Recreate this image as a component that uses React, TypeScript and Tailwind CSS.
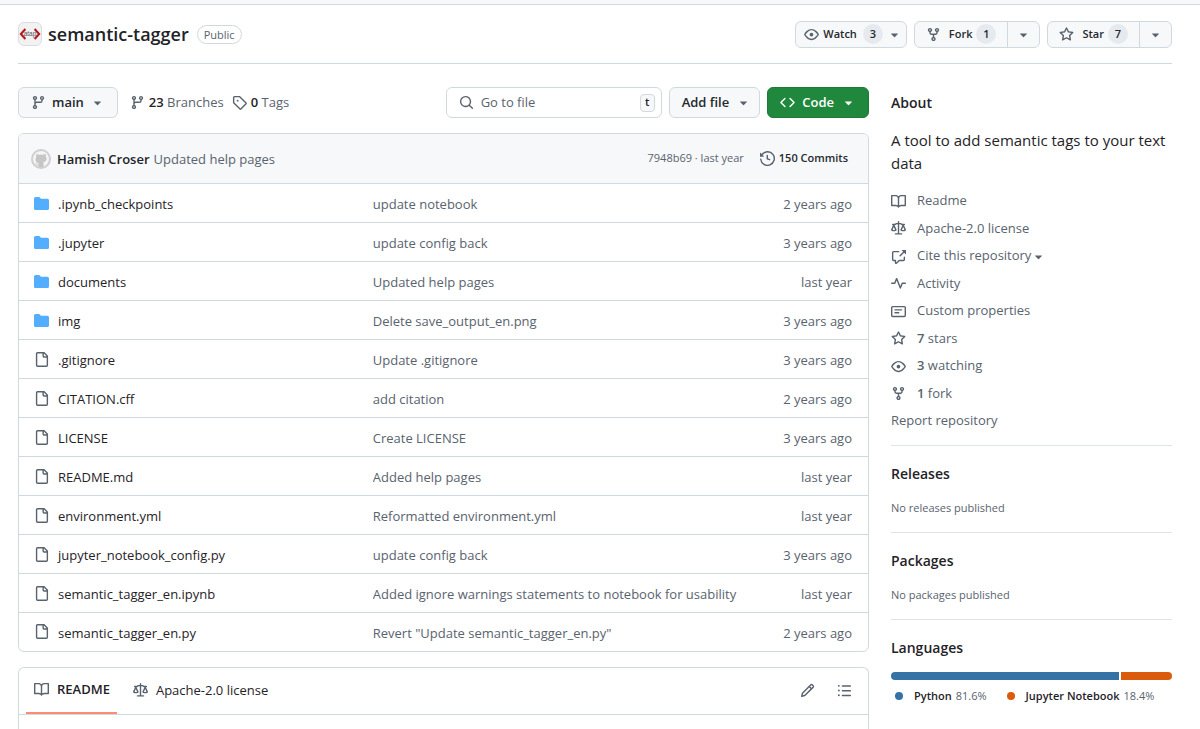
import type { ReactNode } from 'react'
import clsx from 'clsx'

const paths = {
  branch: 'M9.5 3.25a2.25 2.25 0 1 1 3 2.122V6A2.5 2.5 0 0 1 10 8.5H6a1 1 0 0 0-1 1v1.128a2.251 2.251 0 1 1-1.5 0V5.372a2.25 2.25 0 1 1 1.5 0v1.836A2.493 2.493 0 0 1 6 7h4a1 1 0 0 0 1-1v-.628A2.25 2.25 0 0 1 9.5 3.25Zm-6 0a.75.75 0 1 0 1.5 0 .75.75 0 0 0-1.5 0Zm8.25-.75a.75.75 0 1 0 0 1.5.75.75 0 0 0 0-1.5ZM4.25 12a.75.75 0 1 0 0 1.5.75.75 0 0 0 0-1.5Z',
  tag: 'M1 7.775V2.75C1 1.784 1.784 1 2.75 1h5.025c.464 0 .91.184 1.238.513l6.25 6.25a1.75 1.75 0 0 1 0 2.474l-5.026 5.026a1.75 1.75 0 0 1-2.474 0l-6.25-6.25A1.752 1.752 0 0 1 1 7.775Zm1.5 0c0 .066.026.13.073.177l6.25 6.25a.25.25 0 0 0 .354 0l5.025-5.025a.25.25 0 0 0 0-.354l-6.25-6.25a.25.25 0 0 0-.177-.073H2.75a.25.25 0 0 0-.25.25ZM6 5a1 1 0 1 1 0 2 1 1 0 0 1 0-2Z',
  search: 'M10.68 11.74a6 6 0 0 1-7.922-8.982 6 6 0 0 1 8.982 7.922l3.04 3.04a.749.749 0 0 1-.326 1.275.749.749 0 0 1-.734-.215ZM11.5 7a4.499 4.499 0 1 0-8.997 0A4.499 4.499 0 0 0 11.5 7Z',
  code: 'm11.28 3.22 4.25 4.25a.75.75 0 0 1 0 1.06l-4.25 4.25a.749.749 0 0 1-1.275-.326.749.749 0 0 1 .215-.734L13.94 8l-3.72-3.72a.749.749 0 0 1 .326-1.275.749.749 0 0 1 .734.215Zm-6.56 0a.751.751 0 0 1 1.042.018.751.751 0 0 1 .018 1.042L2.06 8l3.72 3.72a.749.749 0 0 1-.326 1.275.749.749 0 0 1-.734-.215L.47 8.53a.75.75 0 0 1 0-1.06Z',
  caret: 'm4.427 7.427 3.396 3.396a.25.25 0 0 0 .354 0l3.396-3.396A.25.25 0 0 0 11.396 7H4.604a.25.25 0 0 0-.177.427Z',
  eye: 'M8 2c1.981 0 3.671.992 4.933 2.078 1.27 1.091 2.187 2.345 2.637 3.023a1.62 1.62 0 0 1 0 1.798c-.45.678-1.367 1.932-2.637 3.023C11.67 13.008 9.981 14 8 14c-1.981 0-3.671-.992-4.933-2.078C1.797 10.83.88 9.576.43 8.898a1.62 1.62 0 0 1 0-1.798c.45-.677 1.367-1.931 2.637-3.022C4.33 2.992 6.019 2 8 2ZM1.679 7.932a.12.12 0 0 0 0 .136c.411.622 1.241 1.75 2.366 2.717C5.176 11.758 6.527 12.5 8 12.5c1.473 0 2.825-.742 3.955-1.715 1.124-.967 1.954-2.096 2.366-2.717a.12.12 0 0 0 0-.136c-.412-.621-1.242-1.75-2.366-2.717C10.824 4.242 9.473 3.5 8 3.5c-1.473 0-2.825.742-3.955 1.715-1.124.967-1.954 2.096-2.366 2.717ZM8 10a2 2 0 1 1-.001-3.999A2 2 0 0 1 8 10Z',
  fork: 'M5 5.372v.878c0 .414.336.75.75.75h4.5a.75.75 0 0 0 .75-.75v-.878a2.25 2.25 0 1 1 1.5 0v.878a2.25 2.25 0 0 1-2.25 2.25h-1.5v2.128a2.251 2.251 0 1 1-1.5 0V8.5h-1.5A2.25 2.25 0 0 1 3.5 6.25v-.878a2.25 2.25 0 1 1 1.5 0ZM5 3.25a.75.75 0 1 0-1.5 0 .75.75 0 0 0 1.5 0Zm6.75.75a.75.75 0 1 0 0-1.5.75.75 0 0 0 0 1.5Zm-3 8.75a.75.75 0 1 0-1.5 0 .75.75 0 0 0 1.5 0Z',
  star: 'M8 .25a.75.75 0 0 1 .673.418l1.882 3.815 4.21.612a.75.75 0 0 1 .416 1.279l-3.046 2.97.719 4.192a.751.751 0 0 1-1.088.791L8 12.347l-3.766 1.98a.75.75 0 0 1-1.088-.79l.72-4.194L.818 6.374a.75.75 0 0 1 .416-1.28l4.21-.611L7.327.668A.75.75 0 0 1 8 .25Zm0 2.445L6.615 5.5a.75.75 0 0 1-.564.41l-3.097.45 2.24 2.184a.75.75 0 0 1 .216.664l-.528 3.084 2.769-1.456a.75.75 0 0 1 .698 0l2.77 1.456-.53-3.084a.75.75 0 0 1 .216-.664l2.24-2.183-3.096-.45a.75.75 0 0 1-.564-.41L8 2.694Z',
  history: 'm.427 1.927 1.215 1.215a8.002 8.002 0 1 1-1.6 5.685.75.75 0 1 1 1.493-.154 6.5 6.5 0 1 0 1.18-4.458l1.358 1.358A.25.25 0 0 1 3.896 6H.25A.25.25 0 0 1 0 5.75V2.104a.25.25 0 0 1 .427-.177ZM7.75 4a.75.75 0 0 1 .75.75v2.992l2.028.812a.75.75 0 0 1-.557 1.392l-2.5-1A.751.751 0 0 1 7 8.25v-3.5A.75.75 0 0 1 7.75 4Z',
  book: 'M0 1.75A.75.75 0 0 1 .75 1h4.253c1.227 0 2.317.59 3 1.501A3.743 3.743 0 0 1 11.006 1h4.245a.75.75 0 0 1 .75.75v10.5a.75.75 0 0 1-.75.75h-4.507a2.25 2.25 0 0 0-1.591.659l-.622.621a.75.75 0 0 1-1.06 0l-.622-.621A2.25 2.25 0 0 0 5.258 13H.75a.75.75 0 0 1-.75-.75Zm7.251 10.324.004-5.073-.002-2.253A2.25 2.25 0 0 0 5.003 2.5H1.5v9h3.757a3.75 3.75 0 0 1 1.994.574ZM8.755 4.75l-.004 7.322a3.752 3.752 0 0 1 1.992-.572H14.5v-9h-3.495a2.25 2.25 0 0 0-2.25 2.25Z',
  law: 'M8.75.75V2h.985c.304 0 .603.08.867.231l1.29.736c.038.022.08.033.124.033h2.234a.75.75 0 0 1 0 1.5h-.427l2.111 4.692a.75.75 0 0 1-.154.838l-.53-.53.529.531-.001.002-.002.002-.006.006-.006.005-.01.01-.045.04c-.21.176-.441.327-.686.45C14.556 10.78 13.88 11 13 11a4.498 4.498 0 0 1-2.023-.454 3.544 3.544 0 0 1-.686-.45l-.045-.04-.016-.015-.006-.006-.004-.004v-.001a.75.75 0 0 1-.154-.838L12.178 4.5h-.162c-.305 0-.604-.079-.868-.231l-1.29-.736a.245.245 0 0 0-.124-.033H8.75V13h2.5a.75.75 0 0 1 0 1.5h-6.5a.75.75 0 0 1 0-1.5h2.5V3.5h-.984a.245.245 0 0 0-.124.033l-1.289.737c-.265.15-.564.23-.869.23h-.162l2.112 4.692a.75.75 0 0 1-.154.838l-.53-.53.529.531-.001.002-.002.002-.006.006-.016.015-.045.04c-.21.176-.441.327-.686.45C4.556 10.78 3.88 11 3 11a4.498 4.498 0 0 1-2.023-.454 3.544 3.544 0 0 1-.686-.45l-.045-.04-.016-.015-.006-.006-.004-.004v-.001a.75.75 0 0 1-.154-.838L2.178 4.5H1.75a.75.75 0 0 1 0-1.5h2.234a.249.249 0 0 0 .125-.033l1.288-.737c.265-.15.564-.23.869-.23h.984V.75a.75.75 0 0 1 1.5 0Zm2.945 8.477c.285.135.718.273 1.305.273s1.02-.138 1.305-.273L13 6.327Zm-10 0c.285.135.718.273 1.305.273s1.02-.138 1.305-.273L3 6.327Z',
  cite: 'M2.75 3.5a.25.25 0 0 0-.25.25v7.5c0 .138.112.25.25.25h2a.75.75 0 0 1 .75.75v2.19l2.72-2.72a.749.749 0 0 1 .53-.22h4.5a.25.25 0 0 0 .25-.25v-2.5a.75.75 0 0 1 1.5 0v2.5A1.75 1.75 0 0 1 13.25 13H9.06l-2.573 2.573A1.458 1.458 0 0 1 4 14.543V13H2.75A1.75 1.75 0 0 1 1 11.25v-7.5C1 2.784 1.784 2 2.75 2h5.5a.75.75 0 0 1 0 1.5ZM16 1.25v4.146a.25.25 0 0 1-.427.177L14.03 4.03l-3.75 3.75a.749.749 0 0 1-1.275-.326.749.749 0 0 1 .215-.734l3.75-3.75-1.543-1.543A.25.25 0 0 1 11.604 1h4.146a.25.25 0 0 1 .25.25Z',
  pulse: 'M6 2c.306 0 .582.187.696.471L10 10.731l1.304-3.26A.751.751 0 0 1 12 7h3.25a.75.75 0 0 1 0 1.5h-2.742l-1.812 4.528a.751.751 0 0 1-1.392 0L6 4.77 4.696 8.03A.75.75 0 0 1 4 8.5H.75a.75.75 0 0 1 0-1.5h2.742l1.812-4.529A.751.751 0 0 1 6 2Z',
  note: 'M0 3.75C0 2.784.784 2 1.75 2h12.5c.966 0 1.75.784 1.75 1.75v8.5A1.75 1.75 0 0 1 14.25 14H1.75A1.75 1.75 0 0 1 0 12.25Zm1.75-.25a.25.25 0 0 0-.25.25v8.5c0 .138.112.25.25.25h12.5a.25.25 0 0 0 .25-.25v-8.5a.25.25 0 0 0-.25-.25ZM3.5 6.25a.75.75 0 0 1 .75-.75h7a.75.75 0 0 1 0 1.5h-7a.75.75 0 0 1-.75-.75Zm.75 2.25h4a.75.75 0 0 1 0 1.5h-4a.75.75 0 0 1 0-1.5Z',
  pencil: 'M11.013 1.427a1.75 1.75 0 0 1 2.474 0l1.086 1.086a1.75 1.75 0 0 1 0 2.474l-8.61 8.61c-.21.21-.47.364-.756.445l-3.251.93a.75.75 0 0 1-.927-.928l.929-3.25c.081-.286.235-.547.445-.758l8.61-8.61Zm.176 4.823L9.75 4.81l-6.286 6.287a.253.253 0 0 0-.064.108l-.558 1.953 1.953-.558a.253.253 0 0 0 .108-.064Zm1.238-3.763a.25.25 0 0 0-.354 0L10.811 3.75l1.439 1.44 1.263-1.263a.25.25 0 0 0 0-.354Z',
  list: 'M5.75 2.5h8.5a.75.75 0 0 1 0 1.5h-8.5a.75.75 0 0 1 0-1.5Zm0 5h8.5a.75.75 0 0 1 0 1.5h-8.5a.75.75 0 0 1 0-1.5Zm0 5h8.5a.75.75 0 0 1 0 1.5h-8.5a.75.75 0 0 1 0-1.5ZM2 14a1 1 0 1 1 0-2 1 1 0 0 1 0 2Zm1-6a1 1 0 1 1-2 0 1 1 0 0 1 2 0ZM2 4a1 1 0 1 1 0-2 1 1 0 0 1 0 2Z',
  file: 'M2 1.75C2 .784 2.784 0 3.75 0h6.586c.464 0 .909.184 1.237.513l2.914 2.914c.329.328.513.773.513 1.237v9.586A1.75 1.75 0 0 1 13.25 16h-9.5A1.75 1.75 0 0 1 2 14.25Zm1.75-.25a.25.25 0 0 0-.25.25v12.5c0 .138.112.25.25.25h9.5a.25.25 0 0 0 .25-.25V6h-2.75A1.75 1.75 0 0 1 9 4.25V1.5Zm6.75.062V4.25c0 .138.112.25.25.25h2.688l-.011-.013-2.914-2.914-.013-.011Z',
  folder: 'M1.75 1A1.75 1.75 0 0 0 0 2.75v10.5C0 14.216.784 15 1.75 15h12.5A1.75 1.75 0 0 0 16 13.25v-8.5A1.75 1.75 0 0 0 14.25 3H7.5a.25.25 0 0 1-.2-.1l-.9-1.2C6.07 1.26 5.55 1 5 1H1.75Z',
}

type IconName = keyof typeof paths

function Icon({ name, className = 'text-[#59636e]' }: { name: IconName; className?: string }) {
  return (
    <svg viewBox="0 0 16 16" className={clsx('size-[15px] shrink-0', className)} fill="currentColor" aria-hidden="true">
      <path d={paths[name]} />
    </svg>
  )
}

interface Entry {
  name: string;
  message: string;
  date: string;
  folder?: boolean;
}

const entries: Entry[] = [
  { name: '.ipynb_checkpoints', message: 'update notebook', date: '2 years ago', folder: true },
  { name: '.jupyter', message: 'update config back', date: '3 years ago', folder: true },
  { name: 'documents', message: 'Updated help pages', date: 'last year', folder: true },
  { name: 'img', message: 'Delete save_output_en.png', date: '3 years ago', folder: true },
  { name: '.gitignore', message: 'Update .gitignore', date: '3 years ago' },
  { name: 'CITATION.cff', message: 'add citation', date: '2 years ago' },
  { name: 'LICENSE', message: 'Create LICENSE', date: '3 years ago' },
  { name: 'README.md', message: 'Added help pages', date: 'last year' },
  { name: 'environment.yml', message: 'Reformatted environment.yml', date: 'last year' },
  { name: 'jupyter_notebook_config.py', message: 'update config back', date: '3 years ago' },
  { name: 'semantic_tagger_en.ipynb', message: 'Added ignore warnings statements to notebook for usability', date: 'last year' },
  { name: 'semantic_tagger_en.py', message: 'Revert "Update semantic_tagger_en.py"', date: '2 years ago' },
]

const links: { icon: IconName; count?: number; label: string; caret?: boolean }[] = [
  { icon: 'book', label: 'Readme' },
  { icon: 'law', label: 'Apache-2.0 license' },
  { icon: 'cite', label: 'Cite this repository', caret: true },
  { icon: 'pulse', label: 'Activity' },
  { icon: 'note', label: 'Custom properties' },
  { icon: 'star', count: 7, label: 'stars' },
  { icon: 'eye', count: 3, label: 'watching' },
  { icon: 'fork', count: 1, label: 'fork' },
]

const languages = [
  { name: 'Python', share: 81.6, color: 'bg-[#3572a5]' },
  { name: 'Jupyter Notebook', share: 18.4, color: 'bg-[#da5b0b]' },
]

function Count({ children }: { children: ReactNode }) {
  return <span className="flex size-5 items-center justify-center rounded-full bg-[#e6eaef]">{children}</span>
}

function SplitButton({ icon, label, count }: { icon: IconName; label: string; count: number }) {
  return (
    <div className="flex h-[27px] rounded-md border border-[#d1d9e0] bg-[#f6f8fa]">
      <button className="flex items-center gap-1 px-[11px]">
        <Icon name={icon} />
        <span className="pl-1">{label}</span>
        <Count>{count}</Count>
      </button>
      <button aria-label={`${label} options`} className="flex w-8 items-center justify-center border-l border-[#d1d9e0]">
        <Icon name="caret" />
      </button>
    </div>
  )
}

function Header() {
  return (
    <header className="mr-7 ml-[18px] flex h-[59px] items-center justify-between border-b border-[#d1d9e0]">
      <div className="flex items-center">
        <svg viewBox="0 0 24 24" className="size-6 rounded-md border border-[#d9dde1] bg-[#f2f2f2]" aria-hidden="true">
          <text x="12" y="14" textAnchor="middle" fontSize="7" fontFamily="Liberation Sans, sans-serif" fill="#555">atap</text>
          <path d="M7 6.5 2 12l5 5.5M17 6.5l5 5.500-5 5.500" fill="none" stroke="#b5161b" strokeWidth="2.2" />
        </svg>
        <a href="#repo" className="ml-1.5 text-lg font-semibold">semantic-tagger</a>
        <span className="ml-2 rounded-full border border-[#d1d9e0] px-1.5 text-[11px] leading-[17px] font-medium text-[#59636e]">Public</span>
      </div>
      <div className="flex items-center gap-[7px] text-[11px] font-semibold text-[#25292e]">
        <button className="flex h-[27px] items-center gap-1 rounded-md border border-[#d1d9e0] bg-[#f6f8fa] pr-1 pl-2">
          <Icon name="eye" />
          <span className="pr-0.5">Watch</span>
          <Count>3</Count>
          <Icon name="caret" />
        </button>
        <SplitButton icon="fork" label="Fork" count={1} />
        <SplitButton icon="star" label="Star" count={7} />
      </div>
    </header>
  )
}

function Toolbar() {
  return (
    <div className="flex h-[31px] items-center text-[13px]">
      <button className="flex h-full items-center rounded-md border border-[#d1d9e0] bg-[#f6f8fa] px-3 font-semibold text-[#25292e]">
        <Icon name="branch" />
        <span className="mx-1.5">main</span>
        <Icon name="caret" />
      </button>
      <a href="#branches" className="ml-3 flex items-center gap-1 font-medium text-[#59636e]">
        <Icon name="branch" />
        <span><b className="font-semibold text-[#1f2328]">23</b> Branches</span>
      </a>
      <a href="#tags" className="ml-2 flex items-center gap-1 font-medium text-[#59636e]">
        <Icon name="tag" />
        <span><b className="font-semibold text-[#1f2328]">0</b> Tags</span>
      </a>
      <div className="ml-auto flex h-full gap-[7px]">
        <label className="flex w-[216px] items-center rounded-md border border-[#d1d9e0] pr-1.5 pl-3">
          <Icon name="search" />
          <input type="text" aria-label="Go to file" placeholder="Go to file" className="ml-[7px] w-full min-w-0 outline-none placeholder:text-[#59636e]" />
          <kbd className="flex h-[18px] w-[15px] shrink-0 items-center justify-center rounded border border-[#d1d9e0] bg-[#f6f8fa] font-[Open_Sans,sans-serif] text-[11px] font-semibold">t</kbd>
        </label>
        <button className="flex items-center gap-[7px] rounded-md border border-[#d1d9e0] bg-[#f6f8fa] pr-2 pl-3 font-semibold text-[#25292e]">
          Add file
          <Icon name="caret" />
        </button>
        <button className="flex items-center gap-[7px] rounded-md border border-[#1f7a37] bg-[#1f883d] px-3 font-semibold text-white">
          <Icon name="code" className="text-white" />
          Code
          <Icon name="caret" className="text-white" />
        </button>
      </div>
    </div>
  )
}

function Avatar() {
  return (
    <svg viewBox="0 0 20 20" className="size-5" aria-hidden="true">
      <circle cx="10" cy="10" r="9" fill="#f4f4f4" stroke="#cfcfcf" strokeWidth="2" />
      <path
        d="M5.4 5c1 0 1.9.5 2.5.9a8 8 0 0 1 4.2 0c.6-.4 1.5-.9 2.5-.9.4 1 .3 1.700.1 2.200.5.6.8 1.300.8 2.200 0 2.700-1.700 3.500-3.500 3.800.4.3.6.8.6 1.500V18H7.400v-1.800c-1.500.3-2-.5-2.400-1.300-.2-.4-.5-.6-.8-.8.9-.3 1.400.2 1.800.8.4.5.8.6 1.400.4 0-.5.3-.9.6-1.100-1.800-.3-3.500-1.100-3.500-3.800 0-.9.3-1.600.8-2.200-.2-.5-.3-1.200.1-2.200Z"
        fill="#c6c6c6"
      />
    </svg>
  )
}

function FileList() {
  return (
    <div className="mt-[15px] overflow-hidden rounded-md border border-[#d1d9e0]">
      <div className="flex h-[49px] items-center bg-[#f6f8fa] pr-5 pl-3">
        <Avatar />
        <div className="ml-1.5 flex gap-1 pt-0.5 text-[13px]">
          <a href="#author" className="font-semibold">Hamish Croser</a>
          <a href="#commit" className="text-[#59636e]">Updated help pages</a>
        </div>
        <span className="ml-auto text-[11px] text-[#59636e]">7948b69 · last year</span>
        <a href="#commits" className="ml-4 flex items-center gap-1 text-[11px] font-semibold text-[#25292e]">
          <Icon name="history" />
          150 Commits
        </a>
      </div>
      <table className="w-full table-fixed text-[13px]">
        <tbody>
          {entries.map((entry) => (
            <tr key={entry.name} className="h-[39px] border-t border-[#d1d9e0] last:h-[38px]">
              <td className="w-5/12 pl-[15px]">
                <a href="#file" className="flex items-center gap-[9px]">
                  <Icon name={entry.folder ? 'folder' : 'file'} className={entry.folder ? 'text-[#54aeff]' : 'text-[#59636e]'} />
                  <span className="pt-[3px]">{entry.name}</span>
                </a>
              </td>
              <td className="truncate pt-[3px] text-[#59636e]">{entry.message}</td>
              <td className="w-28 pt-[3px] pr-4 text-right text-[#59636e]">{entry.date}</td>
            </tr>
          ))}
        </tbody>
      </table>
    </div>
  )
}

function Readme() {
  return (
    <section className="mt-[15px] flex-1 rounded-t-md border border-b-0 border-[#d1d9e0]">
      <div className="flex h-[47px] items-center border-b border-[#d1d9e0] pr-4 pl-[7px] text-[13px]">
        <a href="#readme" className="flex h-[46px] items-center gap-2 border-b-2 border-[#fd8c73] pr-[7px] pl-2 font-semibold">
          <Icon name="book" />
          README
        </a>
        <a href="#license" className="ml-4 flex items-center gap-2">
          <Icon name="law" />
          Apache-2.0 license
        </a>
        <button aria-label="Edit file" className="ml-auto"><Icon name="pencil" /></button>
        <button aria-label="Outline" className="ml-[22px]"><Icon name="list" /></button>
      </div>
    </section>
  )
}

function SidebarBlock({ title, children }: { title: string; children: ReactNode }) {
  return (
    <section className="border-t border-[#d1d9e0b3] pt-4 pb-[15px]">
      <h2 className="text-sm leading-6 font-semibold">{title}</h2>
      {children}
    </section>
  )
}

function Sidebar() {
  return (
    <aside className="w-[281px] shrink-0 text-[13px] text-[#59636e] [&_h2]:text-[#1f2328]">
      <h2 className="pt-1 text-sm leading-6 font-semibold">About</h2>
      <p className="mt-3.5 text-[15px] leading-[23px] text-[#1f2328]">A tool to add semantic tags to your text data</p>
      <ul className="mt-3 pb-2.5">
        {links.map((link) => (
          <li key={link.label} className="flex odd:h-7 even:h-[27px]">
            <a href="#about" className="flex items-center">
              <Icon name={link.icon} />
              <span className="ml-[11px]">
                {link.count && <b className="font-semibold">{link.count} </b>}
                {link.label}
              </span>
              {link.caret && <Icon name="caret" />}
            </a>
          </li>
        ))}
        <li className="flex h-7 items-center">
          <a href="#report">Report repository</a>
        </li>
      </ul>
      <SidebarBlock title="Releases">
        <p className="mt-3 text-[11px] leading-[19px]">No releases published</p>
      </SidebarBlock>
      <SidebarBlock title="Packages">
        <p className="mt-3 text-[11px] leading-[19px]">No packages published</p>
      </SidebarBlock>
      <SidebarBlock title="Languages">
        <div className="mt-3 flex h-2 gap-0.5 overflow-hidden rounded-full">
          {languages.map((lang) => (
            <span key={lang.name} className={lang.color} style={{ flexGrow: lang.share }} />
          ))}
        </div>
        <ul className="mt-2 flex gap-4 text-[11px] leading-4 whitespace-nowrap">
          {languages.map((lang) => (
            <li key={lang.name} className="flex items-center pl-1">
              <span className={clsx('size-2 rounded-full', lang.color)} />
              <b className="mr-1 ml-[11px] font-semibold text-[#1f2328]">{lang.name}</b>
              {lang.share}%
            </li>
          ))}
        </ul>
      </SidebarBlock>
    </aside>
  )
}

export default function App() {
  return (
    <div className="flex min-h-screen flex-col bg-white font-[Open_Sans,sans-serif] text-[#1f2328]">
      <div className="h-[5px] border-b border-[#d1d9e0] bg-[#f6f8fa]" />
      <Header />
      <div className="mr-7 ml-[18px] flex flex-1 gap-[22px] pt-[23px]">
        <main className="flex min-w-0 flex-1 flex-col">
          <Toolbar />
          <FileList />
          <Readme />
        </main>
        <Sidebar />
      </div>
    </div>
  )
}
